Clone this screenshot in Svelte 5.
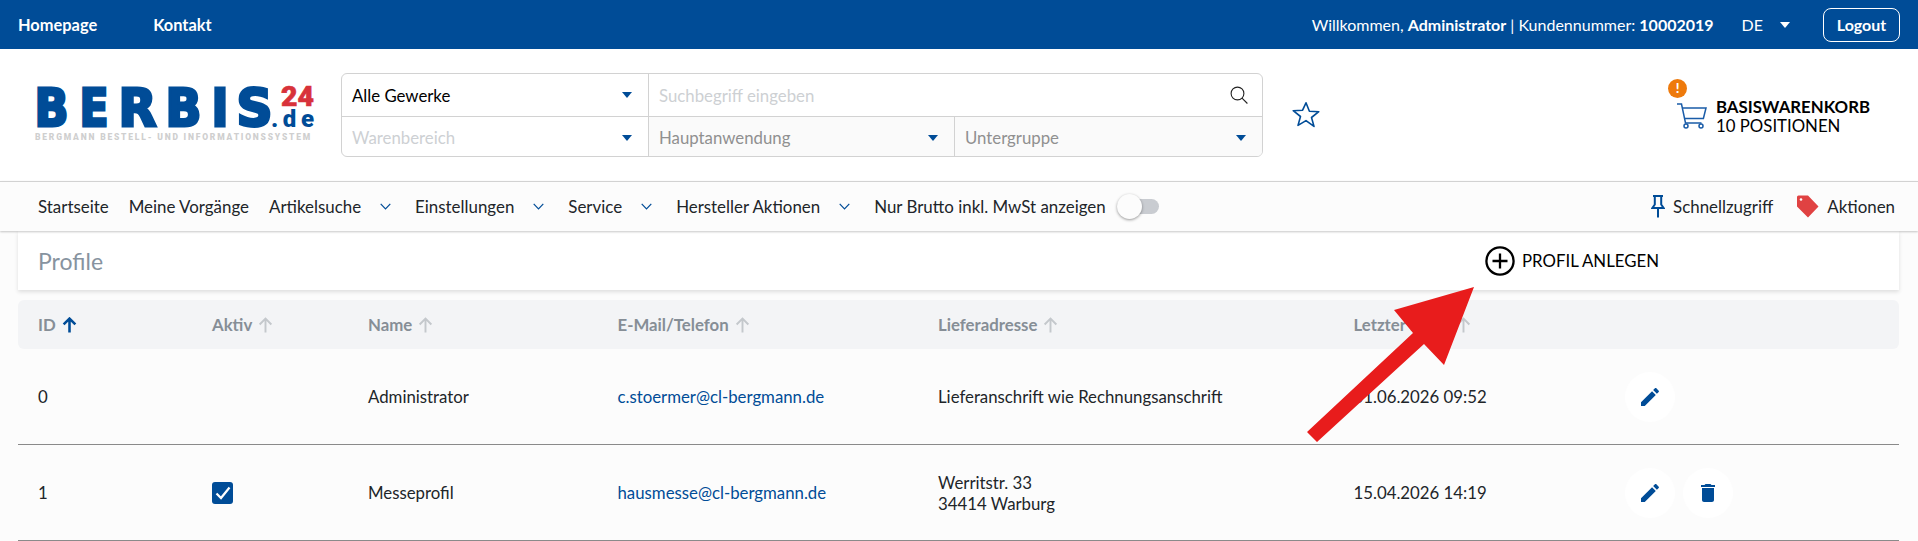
<script>
  const navItems = [
    { label: 'Startseite' },
    { label: 'Meine Vorgänge' },
    { label: 'Artikelsuche', menu: true },
    { label: 'Einstellungen', menu: true },
    { label: 'Service', menu: true },
    { label: 'Hersteller Aktionen', menu: true },
  ]

  const columns = [
    { label: 'ID', active: true },
    { label: 'Aktiv' },
    { label: 'Name' },
    { label: 'E-Mail/Telefon' },
    { label: 'Lieferadresse' },
    { label: 'Letzter Login' },
  ]

  const profiles = [
    {
      id: 0,
      active: false,
      name: 'Administrator',
      email: 'c.stoermer@cl-bergmann.de',
      address: ['Lieferanschrift wie Rechnungsanschrift'],
      last: '01.06.2026 09:52',
      canDelete: false,
    },
    {
      id: 1,
      active: true,
      name: 'Messeprofil',
      email: 'hausmesse@cl-bergmann.de',
      address: ['Werritstr. 33', '34414 Warburg'],
      last: '15.04.2026 14:19',
      canDelete: true,
    },
  ]

  const logoLetters = [
    { c: 'B', x: 34.5, w: 34 },
    { c: 'E', x: 79.5, w: 29 },
    { c: 'R', x: 118.5, w: 38 },
    { c: 'B', x: 165.5, w: 36 },
    { c: 'I', x: 211.5, w: 17 },
    { c: 'S', x: 236.5, w: 36 },
  ]
</script>

<div class="page">
  <div class="topbar">
    <div class="top-links">
      <span>Homepage</span>
      <span>Kontakt</span>
    </div>
    <div class="top-right">
      <span class="welcome">Willkommen, <b>Administrator</b> | Kundennummer: <b>10002019</b></span>
      <span class="lang">DE <i class="caret white"></i></span>
      <button class="logout">Logout</button>
    </div>
  </div>

  <header class="head">
    <svg class="logo" width="300" height="70" viewBox="30 80 300 70">
      {#each logoLetters as l}
        <text class="logo-big" x={l.x} y="125.5" textLength={l.w} lengthAdjust="spacingAndGlyphs">{l.c}</text>
      {/each}
      <text class="logo-24" x="281" y="105.5" textLength="33" lengthAdjust="spacingAndGlyphs">24</text>
      <text class="logo-de" x="271" y="127" textLength="43" lengthAdjust="spacing">.de</text>
      <text class="logo-tag" x="35" y="140">BERGMANN BESTELL- UND INFORMATIONSSYSTEM</text>
    </svg>

    <div class="search">
      <div class="cell">
        <span class="val">Alle Gewerke</span><i class="caret"></i>
      </div>
      <div class="cell wide">
        <span class="ph">Suchbegriff eingeben</span>
        <svg width="18" height="18" viewBox="0 0 18 18" fill="none" stroke="#222" stroke-width="1.1">
          <circle cx="7.5" cy="7.5" r="6.4" />
          <path d="M12 12.2l5.4 5.3" />
        </svg>
      </div>
      <div class="cell lower">
        <span class="ph">Warenbereich</span><i class="caret"></i>
      </div>
      <div class="cell lower grey">
        <span class="muted">Hauptanwendung</span><i class="caret"></i>
      </div>
      <div class="cell lower grey">
        <span class="muted">Untergruppe</span><i class="caret"></i>
      </div>
    </div>

    <svg class="star" width="30" height="27" viewBox="0 0 30 27" fill="none" stroke="#004c97" stroke-width="1.6">
      <path d="M15 1.8l3.4 8.4 9.4.5-7.3 5.8 2.5 8.9L15 19.6l-8 4.8 2.5-8.9-7.3-5.8 9.4-.5z" stroke-linejoin="round" />
    </svg>

    <div class="basket">
      <span class="badge">!</span>
      <svg width="30" height="26" viewBox="0 0 30 26" fill="none" stroke="#1a5ca8" stroke-width="1.5">
        <path d="M0 1h4.5l4 19h16" />
        <path d="M5.4 5H29l-2.6 10.5H7.6" />
        <circle cx="9" cy="23" r="2" />
        <circle cx="24" cy="23" r="2" />
      </svg>
      <div class="basket-text">
        <b>BASISWARENKORB</b>
        <span>10 POSITIONEN</span>
      </div>
    </div>
  </header>

  <nav class="nav">
    {#each navItems as item}
      <span class="nav-item">
        {item.label}
        {#if item.menu}
          <svg class="chev" width="11" height="7" viewBox="0 0 11 7" fill="none" stroke="#004c97" stroke-width="1.2">
            <path d="M.7.8l4.8 5 4.8-5" />
          </svg>
        {/if}
      </span>
    {/each}
    <span class="nav-item">Nur Brutto inkl. MwSt anzeigen</span>
    <span class="toggle"><span class="knob"></span></span>

    <span class="nav-right">
      <span class="quick">
        <svg width="14" height="23" viewBox="0 0 14 23" fill="none" stroke="#004c97" stroke-width="2">
          <path d="M2 1h10M3.8 1v8.5L1.4 13h11.2l-2.4-3.5V1M7 13v9.5" />
        </svg>
        Schnellzugriff
      </span>
      <span class="quick">
        <svg width="23" height="23" viewBox="0 0 23 23">
          <path d="M2.5 0.5h9.5L22.5 11.5 12 22.5 1 11.5V2a1.5 1.5 0 0 1 1.5-1.5z" fill="#e04242" />
          <circle cx="5" cy="4.5" r="1.3" fill="#fff" />
        </svg>
        Aktionen
      </span>
    </span>
  </nav>

  <main class="main">
    <section class="title-card">
      <h1>Profile</h1>
      <button class="add">
        <svg width="30" height="30" viewBox="0 0 30 30" fill="none" stroke="#000" stroke-width="2.3">
          <circle cx="15" cy="15" r="13.6" />
          <path d="M15 7.5v15M7.5 15h15" />
        </svg>
        PROFIL ANLEGEN
      </button>
    </section>

    <div class="table">
      <div class="row th">
        {#each columns as col}
          <span class="th-cell">
            {col.label}
            <svg class:on={col.active} width="15" height="16" viewBox="0 0 14 15" fill="none" stroke-width={col.active ? 2.4 : 1.8}>
              <path d="M7 14.5V1.5M1.5 7L7 1.5 12.5 7" />
            </svg>
          </span>
        {/each}
        <span></span>
      </div>

      {#each profiles as p}
        <div class="row td">
          <span>{p.id}</span>
          <span>
            {#if p.active}
              <span class="check">
                <svg width="16" height="14" viewBox="0 0 16 14" fill="none" stroke="#fff" stroke-width="2.2">
                  <path d="M1.5 7.5l4.5 4.5L14.5 1.5" />
                </svg>
              </span>
            {/if}
          </span>
          <span>{p.name}</span>
          <span class="mail">{p.email}</span>
          <span class="addr">
            {#each p.address as line}
              <span>{line}</span>
            {/each}
          </span>
          <span>{p.last}</span>
          <span class="actions">
            <span class="round">
              <svg width="24" height="24" viewBox="0 0 24 24" fill="#004c97">
                <path d="M3 17.25V21h3.75L17.81 9.94l-3.75-3.75L3 17.25zM20.71 7.04c.39-.39.39-1.02 0-1.41l-2.34-2.34c-.39-.39-1.02-.39-1.41 0l-1.83 1.83 3.75 3.75 1.83-1.83z" />
              </svg>
            </span>
            {#if p.canDelete}
              <span class="round">
                <svg width="24" height="24" viewBox="0 0 24 24" fill="#004c97">
                  <path d="M6 19c0 1.1.9 2 2 2h8c1.1 0 2-.9 2-2V7H6v12zM19 4h-3.5l-1-1h-5l-1 1H5v2h14V4z" />
                </svg>
              </span>
            {/if}
          </span>
        </div>
      {/each}
    </div>
  </main>

  <!-- annotation drawn over the screenshot -->
  <svg class="arrow" width="180" height="170" viewBox="1300 280 180 170">
    <path d="M1474 287L1394 310 1413 333 1307 432 1317 442 1424 344 1444 365z" fill="#e81c1c" />
  </svg>
</div>

<style>
  :global(body) {
    background: #fcfcfc;
    font-family: Lato, 'Open Sans', sans-serif;
    font-size: 16.8px;
    color: #212529;
  }
  .page {
    position: relative;
    width: 1918px;
    height: 541px;
    overflow: hidden;
  }
  .topbar {
    display: flex;
    justify-content: space-between;
    align-items: center;
    height: 49px;
    padding: 0 18px;
    font-size: 16px;
    color: #fff;
    background: #004c97;
  }
  .top-links {
    display: flex;
    gap: 56px;
    font-size: 16.4px;
    font-weight: 700;
    margin-top: -1px;
  }
  .top-right {
    display: flex;
    align-items: center;
  }
  .lang {
    display: flex;
    align-items: center;
    gap: 17px;
    margin: 0 33px 0 28px;
  }
  .logout {
    width: 77px;
    height: 34px;
    padding: 0;
    font: inherit;
    font-weight: 700;
    color: #fff;
    background: transparent;
    border: 1px solid #fff;
    border-radius: 8px;
  }
  .caret {
    display: inline-block;
    width: 0;
    height: 0;
    border-top: 6px solid #004c97;
    border-left: 5.5px solid transparent;
    border-right: 5.5px solid transparent;
  }
  .caret.white {
    border-top-color: #fff;
  }

  .head {
    display: flex;
    align-items: flex-start;
    height: 132px;
    background: #fff;
  }
  .logo {
    flex: none;
    margin: 31px 11px 0 30px;
  }
  .logo-big {
    font-family: 'DejaVu Sans', sans-serif;
    font-size: 51px;
    font-weight: 700;
    fill: #004c97;
    stroke: #004c97;
    stroke-width: 3px;
  }
  .logo-24 {
    font-family: Roboto, sans-serif;
    font-size: 27px;
    font-weight: 900;
    fill: #d8323a;
    stroke: #d8323a;
    stroke-width: 0.6px;
  }
  .logo-de {
    font-family: Roboto, sans-serif;
    font-size: 24px;
    font-weight: 900;
    fill: #004c97;
  }
  .logo-tag {
    font-family: Roboto, sans-serif;
    font-size: 8.5px;
    font-weight: 900;
    letter-spacing: 1.8px;
    fill: #cfcfcf;
  }
  .search {
    flex: none;
    display: grid;
    grid-template-columns: 306px 306px 1fr;
    grid-template-rows: 42px 42px;
    width: 922px;
    height: 84px;
    margin-top: 24px;
    box-sizing: border-box;
    overflow: hidden;
    background: #fff;
    border: 1px solid #d2d2d2;
    border-radius: 6px;
  }
  .cell {
    display: flex;
    justify-content: space-between;
    align-items: center;
    padding: 0 16px 0 10px;
    box-sizing: border-box;
  }
  .cell + .cell {
    border-left: 1px solid #d2d2d2;
  }
  .cell.wide {
    grid-column: span 2;
    padding-right: 14px;
  }
  .cell.lower {
    border-top: 1px solid #d2d2d2;
  }
  .cell.lower:nth-child(3) {
    border-left: none;
  }
  .cell.grey {
    background: #fafafa;
  }
  .val {
    color: #000;
  }
  .ph {
    color: #cdd0d3;
  }
  .muted {
    color: #909090;
  }
  .star {
    flex: none;
    margin: 52px 0 0 28px;
  }
  .basket {
    position: relative;
    display: flex;
    align-items: center;
    gap: 9px;
    margin: 48px 0 0 356px;
  }
  .badge {
    position: absolute;
    top: -18px;
    left: -9px;
    width: 19px;
    height: 19px;
    font-size: 13px;
    font-weight: 900;
    line-height: 19px;
    text-align: center;
    color: #fff;
    background: #ee7a0c;
    border-radius: 50%;
  }
  .basket-text {
    display: flex;
    flex-direction: column;
    line-height: 19px;
    color: #000;
  }

  .nav {
    position: relative;
    display: flex;
    align-items: center;
    gap: 20px;
    height: 50px;
    box-sizing: border-box;
    padding: 0 23px 0 38px;
    font-size: 16.9px;
    background: #fcfcfc;
    border-top: 1px solid #d2d2d2;
    box-shadow: 0 1px 2px rgba(0, 0, 0, 0.22);
  }
  .nav-item {
    display: flex;
    align-items: center;
  }
  .chev {
    margin-left: 19px;
    margin-right: 4px;
  }
  .toggle {
    position: relative;
    width: 42px;
    height: 15px;
    margin-left: -9px;
    background: #c9ccd1;
    border-radius: 8px;
  }
  .knob {
    position: absolute;
    top: -5px;
    left: 0;
    width: 25px;
    height: 25px;
    background: #fcfcfc;
    border-radius: 50%;
    box-shadow: 0 1px 3px rgba(0, 0, 0, 0.4);
  }
  .nav-right {
    display: flex;
    gap: 23px;
    margin-left: auto;
  }
  .quick {
    display: flex;
    align-items: center;
    gap: 8px;
  }

  .main {
    padding: 0 19px 0 18px;
  }
  .title-card {
    display: flex;
    align-items: center;
    height: 59px;
    padding-left: 20px;
    background: #fff;
    box-shadow: 0 2px 4px rgba(0, 0, 0, 0.12);
  }
  h1 {
    margin: 0;
    font-size: 23px;
    font-weight: 400;
    color: #87939f;
  }
  .add {
    display: flex;
    align-items: center;
    gap: 7px;
    margin-left: 1382px;
    padding: 0;
    font: inherit;
    color: #000;
    background: none;
    border: none;
  }
  .table {
    margin-top: 10px;
  }
  .row {
    display: grid;
    grid-template-columns: 174px 156px 249.5px 320.5px 415.5px 274.5px 1fr;
    align-items: center;
    padding-left: 20px;
  }
  .th {
    height: 49px;
    font-weight: 700;
    color: #868e96;
    background: #f3f4f6;
    border-radius: 6px;
  }
  .th-cell {
    display: flex;
    align-items: center;
    gap: 6px;
  }
  .th-cell svg {
    stroke: #c4c8cc;
  }
  .th-cell svg.on {
    stroke: #004c97;
  }
  .td {
    height: 96px;
    box-sizing: border-box;
    border-bottom: 1px solid #8a8a8a;
  }
  .mail {
    color: #004c97;
  }
  .addr {
    display: flex;
    flex-direction: column;
    line-height: 21px;
  }
  .check {
    display: flex;
    justify-content: center;
    align-items: center;
    width: 21px;
    height: 22px;
    background: #004c97;
    border-radius: 3px;
  }
  .actions {
    display: flex;
    gap: 8px;
    margin-left: -3px;
  }
  .round {
    display: flex;
    justify-content: center;
    align-items: center;
    width: 50px;
    height: 50px;
    background: #fff;
    border-radius: 50%;
  }
  .arrow {
    position: absolute;
    top: 280px;
    left: 1300px;
  }
</style>
